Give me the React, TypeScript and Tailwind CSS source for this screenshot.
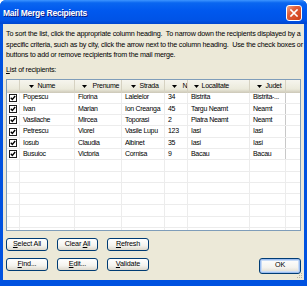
import React from 'react';

type Col = { label: string; w: string; pad: string; gap: string };

// header columns: widths follow the data grid, arrow/label offsets read off the picture
const columns: Col[] = [
  { label: 'Nume', w: 'w-[55px]', pad: 'pl-[8.5px]', gap: 'gap-[4px]' },
  { label: 'Prenume', w: 'w-[47px]', pad: 'pl-[6.5px]', gap: 'gap-[6px]' },
  { label: 'Strada', w: 'w-[43px]', pad: 'pl-[8.5px]', gap: 'gap-[4px]' },
  { label: 'Nr', w: 'w-[23px]', pad: 'pl-[6.5px]', gap: 'gap-[6px]' },
  { label: 'Localitate', w: 'w-[62px]', pad: 'pl-[5.5px]', gap: 'gap-[3px]' },
  { label: 'Judet', w: 'w-[36px]', pad: 'pl-[6.5px]', gap: 'gap-[4px]' },
];

const recipients = [
  ['Popescu', 'Florina', 'Lalelelor', '34', 'Bistrita', 'Bistrita-...'],
  ['Ivan', 'Marian', 'Ion Creanga', '45', 'Targu Neamt', 'Neamt'],
  ['Vasilache', 'Mircea', 'Toporasi', '2', 'Piatra Neamt', 'Neamt'],
  ['Petrescu', 'Viorel', 'Vasile Lupu', '123', 'Iasi', 'Iasi'],
  ['Iosub', 'Claudia', 'Albinet', '35', 'Iasi', 'Iasi'],
  ['Busuioc', 'Victoria', 'Cornisa', '9', 'Bacau', 'Bacau'],
];

const DownArrow = () => (
  <svg width="5" height="3" viewBox="0 0 5 3" className="shrink-0">
    <path d="M0 0h5L2.5 3z" fill="#000" />
  </svg>
);

const CheckBox = () => (
  <div className="w-[8px] h-[8px] border border-[#1b1b1b] bg-white flex items-center justify-center">
    <svg width="6" height="6" viewBox="0 0 6 6">
      <path d="M0.8 2.8 L2.3 4.4 L5.2 1" stroke="#000" strokeWidth="1.4" fill="none" />
    </svg>
  </div>
);

const XpButton: React.FC<{ children: React.ReactNode; w?: string; h?: string; isDefault?: boolean }> = ({
  children,
  w = 'w-[42px]',
  h = 'h-[13px]',
  isDefault,
}) => (
  <div
    className={`${w} ${h} rounded-[3px] border border-[#003c74] bg-[linear-gradient(to_bottom,#ffffff_0%,#f4f3ee_60%,#dcd8cc_100%)] flex items-center justify-center text-[7.2px] text-black tracking-[-0.15px] ${
      isDefault ? 'shadow-[inset_0_0_0_1px_#9cbdf0,inset_0_0_0_2px_#c9dcf6]' : ''
    }`}
  >
    {children}
  </div>
);

const TitleBar = () => (
  <div className="h-[24px] shrink-0 flex items-center pl-[3px] pr-[5px] pt-[2px] bg-[linear-gradient(to_bottom,#3d95ff_0%,#0a66f0_12%,#0058ee_45%,#0053e6_85%,#0046cf_100%)]">
    <span className="flex-1 text-white font-bold text-[8.5px] tracking-[-0.25px] [text-shadow:1px_1px_0_#0a1883]">
      Mail Merge Recipients
    </span>
    <div className="w-[16px] h-[16px] rounded-[3px] border border-white bg-[linear-gradient(135deg,#f0a58a_0%,#e2603b_35%,#cc3d17_100%)] flex items-center justify-center">
      <svg width="8" height="8" viewBox="0 0 8 8">
        <path d="M1 1L7 7M7 1L1 7" stroke="#fff" strokeWidth="1.6" strokeLinecap="square" />
      </svg>
    </div>
  </div>
);

export default function App() {
  return (
    <div className="w-[307px] h-[286px] bg-[#0052e0] rounded-t-[6px] overflow-hidden flex flex-col font-['Liberation_Sans',Arial,sans-serif]">
      <TitleBar />

      <div className="relative flex-1 mx-[3px] mb-[6px] bg-[#ece9d8] flex flex-col px-[3px] pt-[5px] text-black">
        {/* Intro text */}
        <div className="text-[7.2px] leading-[10.5px] tracking-[-0.2px] whitespace-pre">
          <div>To sort the list, click the appropriate column heading.  To narrow down the recipients displayed by a</div>
          <div>specific criteria, such as by city, click the arrow next to the column heading.  Use the check boxes or</div>
          <div>buttons to add or remove recipients from the mail merge.</div>
        </div>

        <div className="mt-[4px] text-[7.2px] leading-[10px] tracking-[-0.2px]">
          <u>L</u>ist of recipients:
        </div>

        {/* Recipients list */}
        <div className="mt-[4px] h-[152px] border border-[#7f9db9] bg-white overflow-hidden flex flex-col">
          <div className="h-[13px] shrink-0 flex bg-[linear-gradient(to_bottom,#f6f5ee_0%,#ebeadb_70%,#d6d2c2_90%,#cbc7b8_100%)] text-[7px] tracking-[-0.25px]">
            <div className="w-[13px] shrink-0 border-r border-[#d6d2c2]" />
            {columns.map((c) => (
              <div
                key={c.label}
                className={`${c.w} shrink-0 ${c.pad} ${c.gap} flex items-center overflow-hidden whitespace-nowrap border-r border-[#d6d2c2]`}
              >
                <DownArrow />
                <span>{c.label}</span>
              </div>
            ))}
            <div className="flex-1" />
          </div>

          {recipients.map((r) => (
            <div key={r[0]} className="h-[11.3px] shrink-0 flex border-b border-[#ececec] text-[7px] tracking-[-0.3px]">
              <div className="w-[13px] shrink-0 flex items-center justify-center border-r border-[#ececec]">
                <CheckBox />
              </div>
              {columns.map((c, i) => (
                <div
                  key={c.label}
                  className={`${c.w} shrink-0 pl-[3px] flex items-center overflow-hidden whitespace-nowrap border-r ${
                    i === 5 ? 'border-[#c8c8c8]' : 'border-[#ececec]'
                  }`}
                >
                  {r[i]}
                </div>
              ))}
              <div className="flex-1" />
            </div>
          ))}

          {Array.from({ length: 7 }).map((_, i) => (
            <div key={i} className="h-[11.3px] shrink-0 flex border-b border-[#ececec]">
              <div className="w-[13px] shrink-0 border-r border-[#ececec]" />
              {columns.map((c) => (
                <div key={c.label} className={`${c.w} shrink-0 border-r border-[#ececec]`} />
              ))}
              <div className="flex-1" />
            </div>
          ))}
        </div>

        {/* Buttons */}
        <div className="mt-[7px] flex gap-[9px]">
          <XpButton><span><u>S</u>elect All</span></XpButton>
          <XpButton w="w-[41px]"><span>Clear <u>A</u>ll</span></XpButton>
          <XpButton><span><u>R</u>efresh</span></XpButton>
        </div>
        <div className="mt-[7px] flex items-start gap-[9px]">
          <XpButton><span><u>F</u>ind...</span></XpButton>
          <XpButton w="w-[41px]"><span><u>E</u>dit...</span></XpButton>
          <XpButton><span><u>V</u>alidate</span></XpButton>
          <div className="ml-auto">
            <XpButton h="h-[16px]" isDefault>OK</XpButton>
          </div>
        </div>

        {/* size grip */}
        <svg width="7" height="7" viewBox="0 0 7 7" className="absolute right-[1px] bottom-[1px]">
          <rect x="5" y="1" width="1" height="1" fill="#b5b2a4" />
          <rect x="3" y="3" width="1" height="1" fill="#b5b2a4" />
          <rect x="5" y="3" width="1" height="1" fill="#b5b2a4" />
          <rect x="1" y="5" width="1" height="1" fill="#b5b2a4" />
          <rect x="3" y="5" width="1" height="1" fill="#b5b2a4" />
          <rect x="5" y="5" width="1" height="1" fill="#b5b2a4" />
        </svg>
      </div>
    </div>
  );
}
